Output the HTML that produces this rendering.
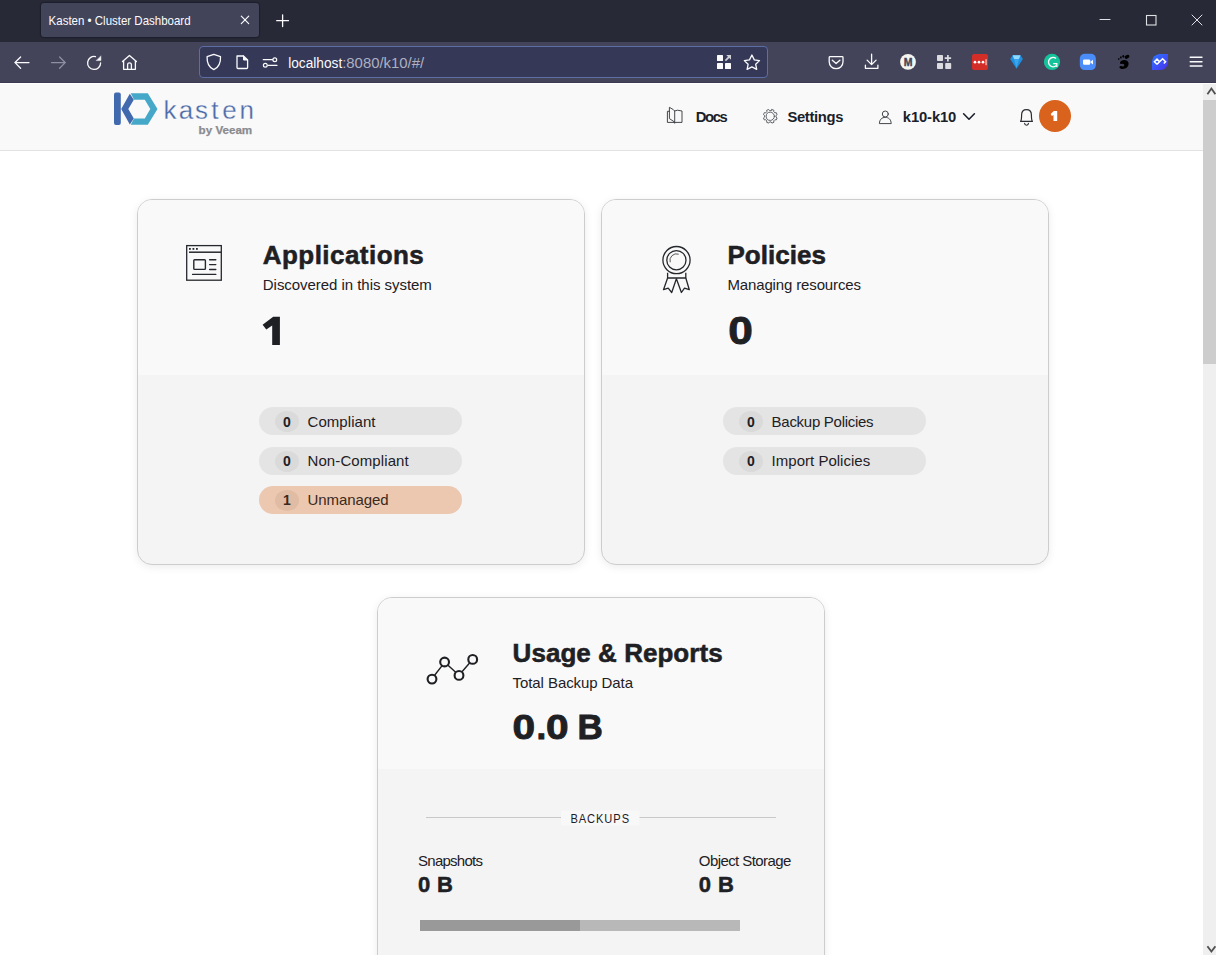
<!DOCTYPE html>
<html><head><meta charset="utf-8">
<style>
*{box-sizing:border-box;margin:0;padding:0}
html,body{width:1216px;height:955px;overflow:hidden;background:#fff;font-family:"Liberation Sans",sans-serif}
.abs{position:absolute}
#tabbar{position:absolute;left:0;top:0;width:1216px;height:42px;background:#282936}
#tab{position:absolute;left:41px;top:3px;width:218px;height:34px;background:#42445a;border-radius:3px;box-shadow:0 0 1px 1px rgba(10,10,20,.35)}
#toolbar{position:absolute;left:0;top:42px;width:1216px;height:41px;background:#434459;border-bottom:1px solid #393a52}
#urlbar{position:absolute;left:199px;top:4px;width:569px;height:32px;background:#353857;border:1px solid #5c6ea5;border-radius:4px}
#page{position:absolute;left:0;top:83px;width:1216px;height:872px;background:#fff}
#header{position:absolute;left:0;top:1px;width:1203px;height:67px;background:#f9f9f9;border-bottom:1px solid #e2e2e2}
.card{position:absolute;width:448px;border:1px solid #cdcdcd;border-radius:15px;background:#f4f4f4;box-shadow:0 2px 8px rgba(0,0,0,.08);overflow:hidden}
.card .top{position:absolute;left:0;top:0;width:100%;background:#f9f9f9}
.pill{position:absolute;width:203px;height:28px;border-radius:14px;background:#e4e4e4}
.pill .c{position:absolute;left:16px;top:3.8px;width:23.8px;height:21px;border-radius:50%;background:#dadada}
#scroll{position:absolute;left:1203px;top:1px;width:13px;height:871px;background:#efefef}
#ov{position:absolute;left:0;top:0;width:1216px;height:955px}
#ov text{font-family:"Liberation Sans",sans-serif}
.b{font-weight:bold}
.h{stroke:#1e2024;stroke-width:0.55px}
</style></head><body>
<div id="tabbar">
  <div id="tab"></div>
</div>
<div id="toolbar">
  <div id="urlbar"></div>
</div>
<div id="page">
  <div id="header"></div>
  <div id="scroll">
    <div class="abs" style="left:0;top:16px;width:13px;height:264px;background:#cdcdcd"></div>
  </div>

  <!-- Applications card -->
  <div class="card" style="left:137px;top:116px;height:366px">
    <div class="top" style="height:175px"></div>
    <div class="pill" style="left:121px;top:207px"><div class="c"></div></div>
    <div class="pill" style="left:121px;top:247px"><div class="c"></div></div>
    <div class="pill" style="left:121px;top:286px;background:#ecc8b0"><div class="c" style="background:#e0bca4"></div></div>
  </div>

  <!-- Policies card -->
  <div class="card" style="left:601px;top:116px;height:366px">
    <div class="top" style="height:175px"></div>
    <div class="pill" style="left:121px;top:207px"><div class="c"></div></div>
    <div class="pill" style="left:121px;top:247px"><div class="c"></div></div>
  </div>

  <!-- Usage card -->
  <div class="card" style="left:377px;top:514px;height:400px">
    <div class="top" style="height:171px"></div>
  </div>
</div>

<svg id="ov" width="1216" height="955" viewBox="0 0 1216 955">
<!-- TEXT -->
<g fill="#fbfbfe">
  <text x="48.6" y="24.7" font-size="12.4" textLength="142" lengthAdjust="spacingAndGlyphs">Kasten • Cluster Dashboard</text>
  <text x="288.2" y="67.8" font-size="14" textLength="54" lengthAdjust="spacingAndGlyphs">localhost</text>
  <text x="342.2" y="67.8" font-size="14" fill="#aeb0c2" textLength="82" lengthAdjust="spacingAndGlyphs">:8080/k10/#/</text>
</g>
<g fill="#1e2024">
  <text class="b h" x="262.8" y="264" font-size="26" textLength="161" lengthAdjust="spacing">Applications</text>
  <text x="262.8" y="290.3" font-size="15" textLength="169" lengthAdjust="spacing">Discovered in this system</text>
  <path d="M273.2,316.8 H279.9 V344.9 H272.2 V325.6 L266.3,329.6 L262.6,324.8 Z"/>
  <text class="b h" x="727.4" y="264" font-size="26" textLength="98.5" lengthAdjust="spacing">Policies</text>
  <text x="727.4" y="290.3" font-size="15" textLength="133.6" lengthAdjust="spacing">Managing resources</text>
  <text class="b" x="728.2" y="344.4" font-size="39" stroke="#1e2024" stroke-width="0.9" textLength="24.6" lengthAdjust="spacingAndGlyphs">0</text>
  <text class="b h" x="512.6" y="661.6" font-size="26" textLength="210" lengthAdjust="spacing">Usage &amp; Reports</text>
  <text x="512.6" y="688.2" font-size="15" textLength="120.4" lengthAdjust="spacing">Total Backup Data</text>
  <g font-weight="bold" font-size="35" stroke="#1e2024" stroke-width="0.9">
  <text x="0" y="738.6" transform="translate(512.4 0) scale(1.16 1)">0</text>
  <text x="536.6" y="738.6">.</text>
  <text x="0" y="738.6" transform="translate(546 0) scale(1.16 1)">0</text>
  <text x="577.6" y="738.6">B</text>
</g>
</g>

<!-- PILL TEXT -->
<g fill="#1e2024" font-size="15">
  <text x="307.5" y="427" textLength="68" lengthAdjust="spacing">Compliant</text>
  <text x="307.5" y="466.1" textLength="101.2" lengthAdjust="spacing">Non-Compliant</text>
  <text x="307.5" y="505" textLength="81" lengthAdjust="spacing" fill="#3a2a20">Unmanaged</text>
  <text x="771.6" y="427" textLength="102" lengthAdjust="spacing">Backup Policies</text>
  <text x="771.6" y="466.1" textLength="98.6" lengthAdjust="spacing">Import Policies</text>
</g>
<g fill="#1e2024" font-size="14" font-weight="bold" text-anchor="middle">
  <text x="287" y="427">0</text>
  <text x="287" y="466.3">0</text>
  <text x="287" y="505.2" fill="#3a2a20">1</text>
  <text x="751" y="427">0</text>
  <text x="751" y="466.3">0</text>
</g>
<!-- BACKUPS -->
<rect x="426" y="817" width="350" height="1" fill="#c8c8c8"/>
<rect x="561" y="810.5" width="78.5" height="15" fill="#f8f8f8"/>
<text transform="translate(570.4 0) scale(0.86 1)" x="0" y="822.8" font-size="12.9" fill="#1e2024" textLength="68.2" lengthAdjust="spacing">BACKUPS</text>
<text x="418" y="866" font-size="15" fill="#1e2024" textLength="65" lengthAdjust="spacing">Snapshots</text>
<text x="698.8" y="866" font-size="15" fill="#1e2024" textLength="92.6" lengthAdjust="spacing">Object Storage</text>
<text x="418" y="891.6" font-size="22" font-weight="bold" fill="#1e2024" stroke="#1e2024" stroke-width="0.5" textLength="35" lengthAdjust="spacing">0 B</text>
<text x="698.8" y="891.6" font-size="22" font-weight="bold" fill="#1e2024" stroke="#1e2024" stroke-width="0.5" textLength="35" lengthAdjust="spacing">0 B</text>
<rect x="420" y="920" width="160" height="11" fill="#999999"/>
<rect x="580" y="920" width="160" height="11" fill="#b8b8b8"/>
<!-- HEADER NAV -->
<g fill="#1b1f2b" font-size="14.8" font-weight="bold">
  <text x="695.8" y="121.6" textLength="32" lengthAdjust="spacing">Docs</text>
  <text x="787.4" y="121.6" textLength="56" lengthAdjust="spacing">Settings</text>
  <text x="902.8" y="121.8" textLength="53.5" lengthAdjust="spacing">k10-k10</text>
</g>
<circle cx="1055" cy="116" r="16" fill="#d9621c"/>
<path d="M1053.8,111.1 H1057.2 V121 H1053.5 V115.1 L1051.9,116.1 L1050.7,114.1 Z" fill="#fff"/>
<!-- LOGO -->
<rect x="114" y="92.6" width="6.8" height="32.4" rx="2" fill="#4169ae"/>
<polygon points="129.8,93.7 133.8,99.7 128.3,109.1 133.8,118.4 129.8,124.5 121.2,109.1" fill="#4169ae"/>
<polygon points="130.7,93.3 147.8,93.3 157.5,109.1 147.8,124.7 130.7,124.7 134,118.4 144.8,118.4 150.3,109.1 144.8,99.7 134,99.7" fill="#46a8c8"/>
<text x="163.4 178.8 195 211.2 222.3 239.4" y="118.5" font-size="26" fill="#4a6aa8" stroke="#f9f9f9" stroke-width="0.3">kasten</text>
<text x="198.6" y="133.7" font-size="11.6" font-weight="bold" fill="#8a8b8f" stroke="#8a8b8f" stroke-width="0.25" textLength="53.6" lengthAdjust="spacingAndGlyphs">by Veeam</text>

<!-- CHROME ICONS -->
<g stroke="#fbfbfe" stroke-width="1.2" fill="none" stroke-linecap="round">
  <path d="M241.3,16.2 L248.7,23.6 M248.7,16.2 L241.3,23.6"/>
  <path d="M282.6,14.8 V26.6 M276.7,20.7 H288.5" stroke-width="1.3"/>
  <path d="M1100,19.5 H1110" stroke="#e0e0e6" stroke-width="1.1"/>
  <rect x="1146.5" y="15.5" width="9.5" height="9.5" stroke="#e0e0e6" stroke-width="1.1"/>
  <path d="M1192,15 L1202,25 M1202,15 L1192,25" stroke="#e0e0e6" stroke-width="1"/>
  <!-- back -->
  <path d="M15.2,62.6 H29 M20.6,57 L15,62.6 L20.6,68.2" stroke-width="1.3"/>
  <path d="M51.5,62.6 H65 M59.6,57 L65.2,62.6 L59.6,68.2" stroke="#8e8fa0" stroke-width="1.3"/>
  <!-- reload -->
  <path d="M100.6,62.95 A6.5,6.5 0 1 1 95.45,56.59" stroke-width="1.3"/>
  <path d="M100.9,56.2 V60.6 H96.5 Z" fill="#fbfbfe" stroke-width="0.5" stroke-linejoin="round"/>
  <!-- home -->
  <path d="M122.5,61.6 L129.45,55.4 L136.4,61.6 M123.6,60.7 V69.3 H135.4 V60.7 M127.6,69.3 V64.7 A1.9,1.9 0 0 1 131.4,64.7 V69.3" stroke-width="1.3" stroke-linejoin="round"/>
  <!-- shield -->
  <path d="M213.8,54.4 L220.5,56.7 C220.8,63 218.5,67.5 213.8,69.6 C209.1,67.5 206.8,63 207.1,56.7 Z" stroke-width="1.3" stroke-linejoin="round"/>
  <!-- page -->
  <path d="M237,56 H243.5 L247.6,60 V67.5 A1,1 0 0 1 246.6,68.5 H238 A1,1 0 0 1 237,67.5 Z" stroke-width="1.3" stroke-linejoin="round"/>
  <path d="M243.5,56 V60 H247.6" fill="#fbfbfe" stroke-width="1"/>
  <!-- permissions -->
  <path d="M263.3,59.7 H272.5 M268,65.3 H277" stroke-width="1.3"/>
  <circle cx="274.8" cy="59.7" r="1.9" stroke-width="1.2"/>
  <circle cx="265.3" cy="65.3" r="1.9" stroke-width="1.2"/>
  <!-- star -->
  <path d="M751.9,55 L754.3,59.9 L759.5,60.6 L755.7,64.3 L756.7,69.4 L751.9,66.9 L747.1,69.4 L748.1,64.3 L744.3,60.6 L749.5,59.9 Z" stroke-width="1.3" stroke-linejoin="round"/>
  <!-- pocket -->
  <path d="M830,56.6 H842.2 A0.8,0.8 0 0 1 843,57.4 V61.8 A6.9,6.9 0 0 1 829.2,61.8 V57.4 A0.8,0.8 0 0 1 830,56.6 Z" stroke-width="1.3"/>
  <path d="M832.3,60.2 L836.1,63.6 L839.9,60.2" stroke-width="1.3" stroke-linejoin="round"/>
  <!-- download -->
  <path d="M871.6,54.2 V64.6 M867.1,60.1 L871.6,64.6 L876.1,60.1 M865.4,65.2 V68.3 H877.9 V65.2" stroke-width="1.3" stroke-linejoin="round"/>
  <!-- hamburger -->
  <path d="M1190.2,57.3 H1202 M1190.2,61.7 H1202 M1190.2,66 H1202" stroke-width="1.4"/>
</g>
<!-- qr-like -->
<g fill="#fbfbfe">
  <rect x="717" y="55" width="6" height="6" rx="0.6"/>
  <rect x="717" y="63" width="6" height="6" rx="0.6"/>
  <rect x="725" y="63" width="6" height="6" rx="0.6"/>
  <path d="M725.4,60.6 L729.6,56.4" stroke="#cfcfd6" stroke-width="1.7" fill="none"/><path d="M726.2,55 H731 V59.8 Z" fill="#cfcfd6"/>
</g>
<circle cx="908" cy="61.9" r="7.9" fill="#f5f5f0"/>
<text x="908" y="65.7" font-size="10.5" font-weight="bold" fill="#42445a" stroke="#42445a" stroke-width="0.35" text-anchor="middle">M</text>
<g fill="#dcdce0">
  <rect x="937" y="55.1" width="6" height="6" rx="0.8"/>
  <rect x="937" y="63" width="6" height="6" rx="0.8"/>
  <rect x="945.2" y="63" width="6" height="6" rx="0.8"/>
  <path d="M947.9,55 V61.4 M944.7,58.2 H951.1" stroke="#dcdce0" stroke-width="1.7"/>
</g>
<rect x="972" y="54" width="16" height="16" rx="2" fill="#d32d27"/>
<g fill="#fff"><circle cx="975" cy="62.2" r="1.35"/><circle cx="979" cy="62.2" r="1.35"/><circle cx="983" cy="62.2" r="1.35"/><rect x="985.6" y="59.2" width="0.9" height="6"/></g>
<path d="M1010.2,59 L1012.6,55.3 H1020.5 L1022.9,59 L1016.5,68.8 Z" fill="#1f8fe0"/>
<path d="M1012.6,55.3 H1020.5 L1019,59 H1014 Z" fill="#8fd8ff"/>
<path d="M1014,59 H1019 L1016.5,68 Z" fill="#3aa6f0"/>
<circle cx="1052" cy="61.9" r="8.1" fill="#15c39a"/>
<path d="M1056,58.5 A4.6,4.6 0 1 0 1056.3,65.5" stroke="#fff" stroke-width="1.5" fill="none"/>
<path d="M1053.2,63.6 H1056.8 V67" stroke="#fff" stroke-width="1.3" fill="none"/>
<rect x="1079.8" y="53.7" width="16.1" height="16.4" rx="5" fill="#4a8cf8"/>
<rect x="1083" y="59.4" width="7.2" height="5.4" rx="1.2" fill="#fff"/>
<path d="M1090.4,61.7 L1093,59.7 V64.5 L1090.4,62.5 Z" fill="#fff"/>
<g fill="#000">
  <ellipse cx="1127" cy="56.8" rx="2.6" ry="1.7" transform="rotate(-30 1127 56.8)"/>
  <ellipse cx="1123.3" cy="56.3" rx="0.9" ry="1.4"/>
  <ellipse cx="1120.9" cy="57.4" rx="0.8" ry="1.2"/>
  <ellipse cx="1118.8" cy="59" rx="0.7" ry="1"/>
  <path d="M1121,61 C1124,59 1128,60 1128.5,63 C1129,66 1126.5,69 1122.5,69 C1119.5,69 1118.5,66.5 1120.5,66 C1122,65.7 1122.5,67 1124,66 C1125,65 1123.5,63.3 1121.5,64 C1120,64.5 1119.3,62.5 1121,61 Z"/>
</g>
<defs><linearGradient id="lg1" x1="0" y1="0" x2="1" y2="1"><stop offset="0" stop-color="#2a78ff"/><stop offset="1" stop-color="#4b2ff0"/></linearGradient></defs>
<path d="M1160,53.9 H1168 V62 C1168,66.5 1164.5,70 1160,70 H1152 V62 C1152,57.5 1155.5,53.9 1160,53.9 Z" fill="url(#lg1)"/>
<path d="M1157,64.3 L1154.4,61.7 L1157,59.1 L1159.6,61.7 M1157,64.3 L1162.6,58.7 L1165.6,61.7 L1163.8,63.5" stroke="#fff" stroke-width="1.5" fill="none" stroke-linejoin="miter"/>

<!-- NAV ICONS -->
<g stroke="#3a3d42" stroke-width="0.95" fill="none" stroke-linejoin="round" stroke-linecap="round">
  <path d="M669.4,111.3 H667.4 V122.4 H674.7 M669.4,107.7 V118.6 L674.7,122.1 V111 L673.6,109.9 Z M674.7,111 L677.4,110.2 L682,111 V122.4 H674.7 V123.2"/>
  <path d="M771.93,109.49 L773.96,110.33 L773.76,111.77 L774.83,112.84 L776.27,112.64 L777.11,114.67 L775.95,115.54 L775.95,117.06 L777.11,117.93 L776.27,119.96 L774.83,119.76 L773.76,120.83 L773.96,122.27 L771.93,123.11 L771.06,121.95 L769.54,121.95 L768.67,123.11 L766.64,122.27 L766.84,120.83 L765.77,119.76 L764.33,119.96 L763.49,117.93 L764.65,117.06 L764.65,115.54 L763.49,114.67 L764.33,112.64 L765.77,112.84 L766.84,111.77 L766.64,110.33 L768.67,109.49 L769.54,110.65 L771.06,110.65 Z" stroke="#5a5d62"/>
  <circle cx="770.3" cy="116.3" r="4.1" stroke="#5a5d62"/>
  <circle cx="885.3" cy="114" r="3" stroke="#3a3d42"/>
  <path d="M879.4,123.2 C879.6,119.3 882,117.4 885.3,117.4 C888.6,117.4 891,119.3 891.2,123.2 Z" stroke="#3a3d42"/>
  <path d="M963.6,113.8 L969,119.2 L974.4,113.8" stroke="#1b1f2b" stroke-width="1.6"/>
  <path d="M1020.6,121.4 C1021.6,120 1021.6,118 1021.6,115 C1021.6,111.6 1023.6,109.7 1026.5,109.7 C1029.4,109.7 1031.4,111.6 1031.4,115 C1031.4,118 1031.4,120 1032.4,121.4 Z" stroke="#2a2d33" stroke-width="1.2"/>
  <path d="M1024.6,123.3 A1.9,1.9 0 0 0 1028.4,123.3" stroke="#2a2d33" stroke-width="1.1"/>
</g>
<!-- CARD ICONS -->
<g stroke="#25282c" fill="none">
  <rect x="186.7" y="245.6" width="34.6" height="34.6" stroke-width="1.3"/>
  <path d="M189,252.2 H221" stroke-width="1.5"/>
  <rect x="193.8" y="259.8" width="11.6" height="9.6" rx="0.8" stroke-width="1.4"/>
  <path d="M209.6,259.7 H215.8 M209.6,264.6 H215.8 M209.6,269.5 H215.8 M192.6,274.4 H215.8" stroke-width="1.4" stroke-linecap="round"/>
</g>
<g fill="#25282c"><rect x="189" y="248" width="1.8" height="1.8"/><rect x="192.5" y="248" width="1.8" height="1.8"/><rect x="196" y="248" width="1.8" height="1.8"/></g>
<g stroke="#25282c" fill="none" stroke-width="1.3" stroke-linejoin="round">
  <circle cx="676.5" cy="260.1" r="13.6"/>
  <circle cx="676.4" cy="260.2" r="9.6"/>
  <path d="M670.2,262.3 A6.6,6.6 0 0 1 678.7,254.2" stroke="#555" stroke-width="1"/>
  <path d="M667.6,272.7 V278 H685.8 V272.7"/>
  <path d="M667.6,278 L663.5,289.7 L668.2,288.1 L671.7,292.5 L676.4,278.7 L681.4,292.5 L684.5,288.1 L689.3,289.7 L685.8,278"/>
</g>
<g stroke="#1e2024" fill="none">
  <path d="M434.6,675.3 L442.1,665.6 M448,665.2 L455.7,672.2 M462,671.8 L469.8,662.7" stroke-width="1.4"/>
  <circle cx="432" cy="679.1" r="4.4" stroke-width="2.1"/>
  <circle cx="444.6" cy="662" r="4.4" stroke-width="2.1"/>
  <circle cx="459" cy="675.4" r="4.4" stroke-width="2.1"/>
  <circle cx="472.7" cy="659.4" r="4.4" stroke-width="2.1"/>
</g>

<path d="M1207.4,94.2 L1211.4,88.6 L1215.4,94.2" stroke="#505050" stroke-width="1.8" fill="none"/>
<path d="M1207.4,946.2 L1211.4,951.6 L1215.4,946.2" stroke="#505050" stroke-width="1.8" fill="none"/>
</svg>
</body></html>
